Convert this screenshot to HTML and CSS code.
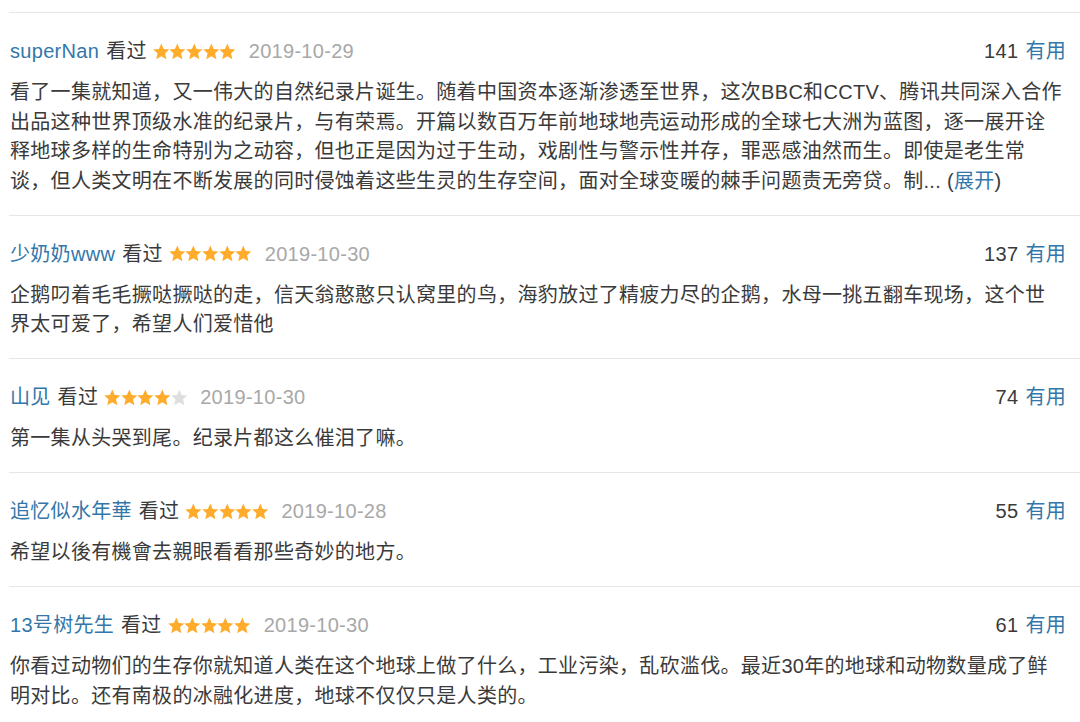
FILE: index.html
```html
<!DOCTYPE html>
<html lang="zh-CN">
<head>
<meta charset="utf-8">
<title>短评</title>
<link rel="stylesheet" href="styles.css">
</head>
<body>
<svg class="defs" width="0" height="0" aria-hidden="true">
  <defs>
    <symbol id="star" viewBox="0 0 16 16">
      <polygon points="8,0.3 10.3,5.5 15.8,6 11.6,9.7 12.9,15.5 8,12.5 3.1,15.5 4.4,9.7 0.2,6 5.7,5.5"/>
    </symbol>
  </defs>
</svg>
<div class="list">
  <div class="item">
    <div class="head">
      <div class="info">
        <a class="user">superNan</a><span class="seen">看过</span>
        <span class="stars"><svg class="on"><use href="#star"/></svg><svg class="on"><use href="#star"/></svg><svg class="on"><use href="#star"/></svg><svg class="on"><use href="#star"/></svg><svg class="on"><use href="#star"/></svg></span>
        <span class="date">2019-10-29</span>
      </div>
      <div class="votes"><span class="count">141</span><a class="useful">有用</a></div>
    </div>
    <p class="text">看了一集就知道，又一伟大的自然纪录片诞生。随着中国资本逐渐渗透至世界，这次BBC和CCTV、腾讯共同深入合作出品这种世界顶级水准的纪录片，与有荣焉。开篇以数百万年前地球地壳运动形成的全球七大洲为蓝图，逐一展开诠释地球多样的生命特别为之动容，但也正是因为过于生动，戏剧性与警示性并存，罪恶感油然而生。即使是老生常谈，但人类文明在不断发展的同时侵蚀着这些生灵的生存空间，面对全球变暖的棘手问题责无旁贷。制... (<a class="more">展开</a>)</p>
  </div>
  <div class="item">
    <div class="head">
      <div class="info">
        <a class="user">少奶奶www</a><span class="seen">看过</span>
        <span class="stars"><svg class="on"><use href="#star"/></svg><svg class="on"><use href="#star"/></svg><svg class="on"><use href="#star"/></svg><svg class="on"><use href="#star"/></svg><svg class="on"><use href="#star"/></svg></span>
        <span class="date">2019-10-30</span>
      </div>
      <div class="votes"><span class="count">137</span><a class="useful">有用</a></div>
    </div>
    <p class="text">企鹅叼着毛毛撅哒撅哒的走，信天翁憨憨只认窝里的鸟，海豹放过了精疲力尽的企鹅，水母一挑五翻车现场，这个世界太可爱了，希望人们爱惜他</p>
  </div>
  <div class="item">
    <div class="head">
      <div class="info">
        <a class="user">山见</a><span class="seen">看过</span>
        <span class="stars"><svg class="on"><use href="#star"/></svg><svg class="on"><use href="#star"/></svg><svg class="on"><use href="#star"/></svg><svg class="on"><use href="#star"/></svg><svg class="off"><use href="#star"/></svg></span>
        <span class="date">2019-10-30</span>
      </div>
      <div class="votes"><span class="count">74</span><a class="useful">有用</a></div>
    </div>
    <p class="text">第一集从头哭到尾。纪录片都这么催泪了嘛。</p>
  </div>
  <div class="item">
    <div class="head">
      <div class="info">
        <a class="user">追忆似水年華</a><span class="seen">看过</span>
        <span class="stars"><svg class="on"><use href="#star"/></svg><svg class="on"><use href="#star"/></svg><svg class="on"><use href="#star"/></svg><svg class="on"><use href="#star"/></svg><svg class="on"><use href="#star"/></svg></span>
        <span class="date">2019-10-28</span>
      </div>
      <div class="votes"><span class="count">55</span><a class="useful">有用</a></div>
    </div>
    <p class="text">希望以後有機會去親眼看看那些奇妙的地方。</p>
  </div>
  <div class="item">
    <div class="head">
      <div class="info">
        <a class="user">13号树先生</a><span class="seen">看过</span>
        <span class="stars"><svg class="on"><use href="#star"/></svg><svg class="on"><use href="#star"/></svg><svg class="on"><use href="#star"/></svg><svg class="on"><use href="#star"/></svg><svg class="on"><use href="#star"/></svg></span>
        <span class="date">2019-10-30</span>
      </div>
      <div class="votes"><span class="count">61</span><a class="useful">有用</a></div>
    </div>
    <p class="text">你看过动物们的生存你就知道人类在这个地球上做了什么，工业污染，乱砍滥伐。最近30年的地球和动物数量成了鲜明对比。还有南极的冰融化进度，地球不仅仅只是人类的。</p>
  </div>
</div>
</body>
</html>
```

FILE: styles.css
```css
html, body {
  margin: 0;
  padding: 0;
  background: #ffffff;
}

body {
  font-family: "Liberation Sans", "Noto Sans CJK SC", sans-serif;
  font-size: 20px;
  letter-spacing: 0.3px;
  color: #3a3a3a;
  overflow: hidden;
}

.defs {
  position: absolute;
  width: 0;
  height: 0;
}

.list {
  padding-top: 12px;
}

.item {
  margin-left: 9px;
  border-top: 1px solid #e6e6e6;
  padding: 23px 14px 18.5px 1px;
}

.head {
  display: flex;
  justify-content: space-between;
  align-items: center;
  height: 30px;
  line-height: 30px;
}

.info {
  display: flex;
  align-items: center;
  white-space: nowrap;
}

.user {
  color: #3377aa;
}

.seen {
  color: #3a3a3a;
  margin-left: 7px;
}

.stars {
  display: flex;
  margin: 0 13px 0 6px;
}

.stars svg {
  width: 16.6px;
  height: 17px;
  display: block;
}

.stars .on {
  fill: #ffac2d;
}

.stars .off {
  fill: #dedede;
}

.date {
  color: #a8a8a8;
}

.votes {
  display: flex;
  white-space: nowrap;
}

.count {
  color: #3a3a3a;
}

.useful {
  color: #3377aa;
  margin-left: 7px;
}

.text {
  margin: 12px 0 0 0;
  line-height: 29.5px;
  max-width: 1054px;
  color: #3a3a3a;
}

.more {
  color: #3377aa;
}
```
